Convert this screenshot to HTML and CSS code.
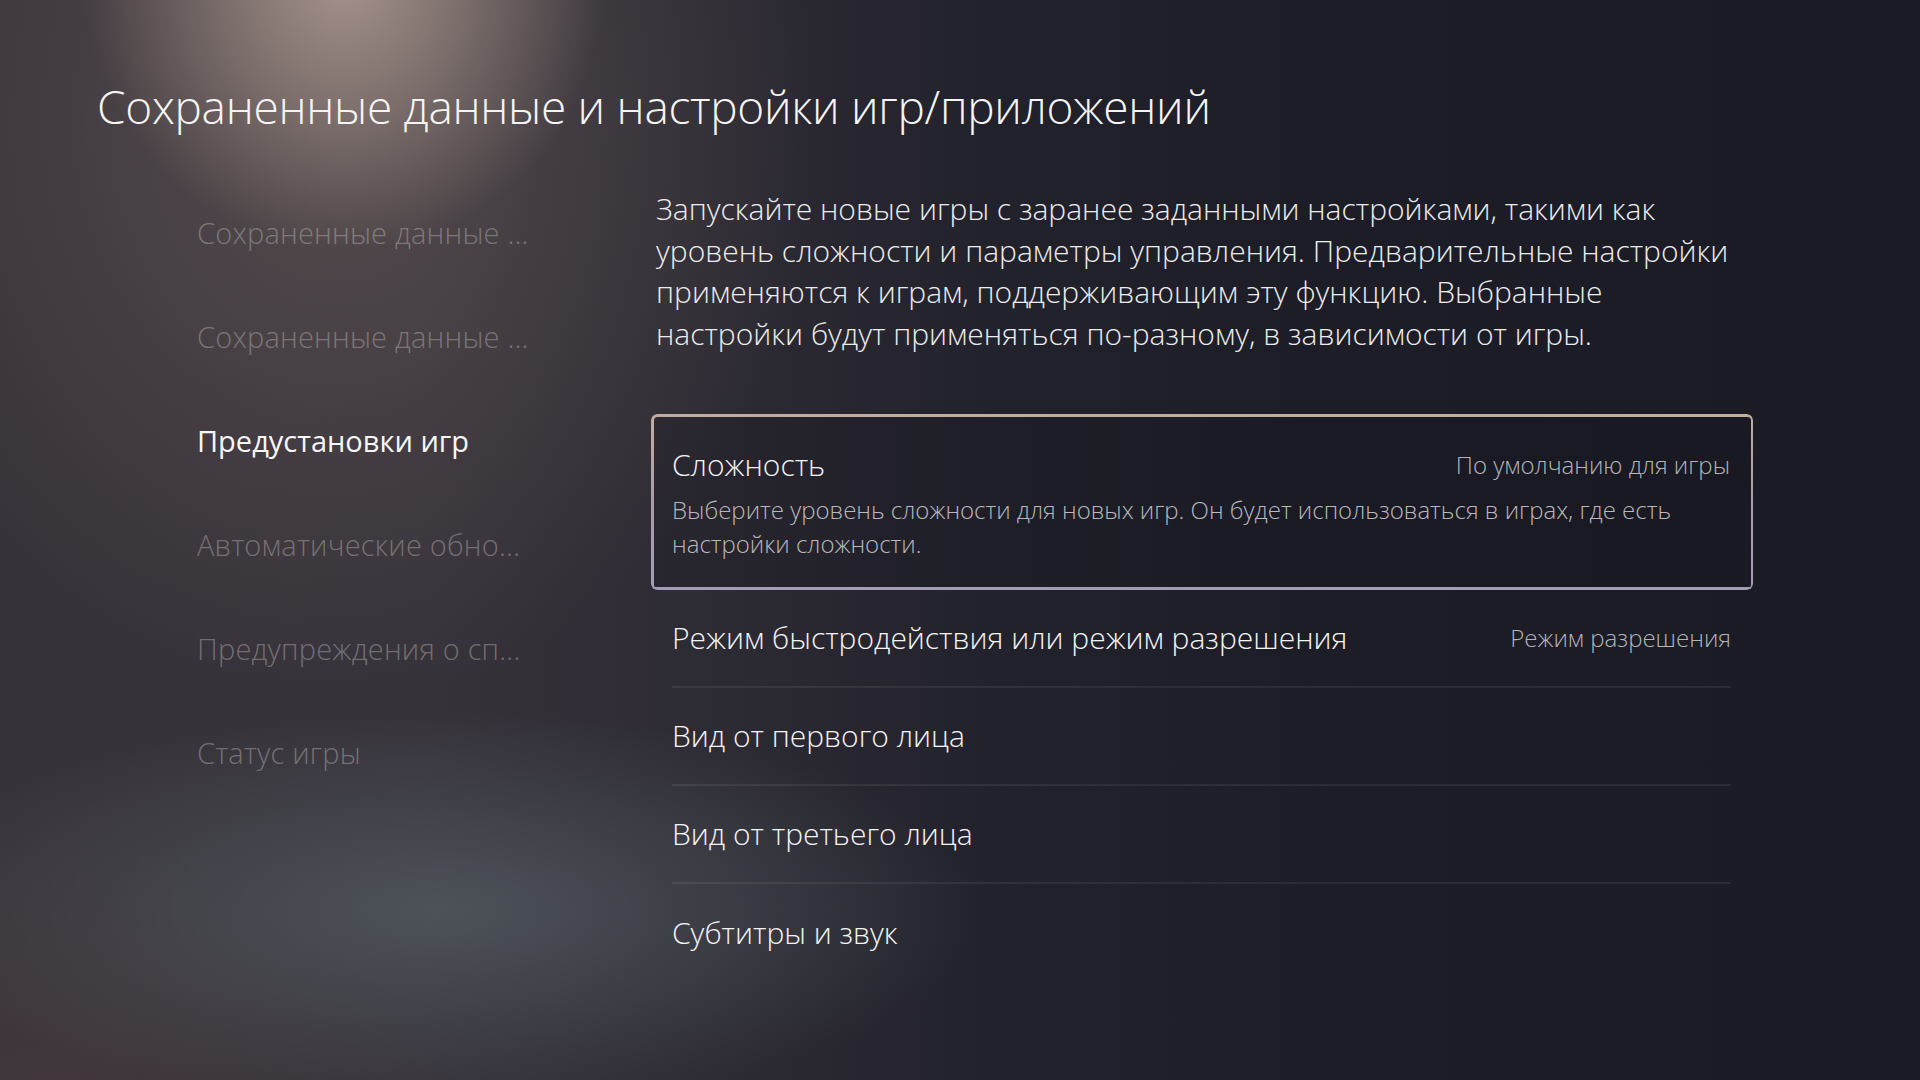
FILE: index.html
```html
<!DOCTYPE html>
<html lang="ru">
<head>
<meta charset="utf-8">
<title>Сохраненные данные и настройки игр/приложений</title>
<link rel="stylesheet" href="styles.css">
</head>
<body>
<div class="screen">
  <h1 class="title">Сохраненные данные и настройки игр/приложений</h1>
  <div class="layout">
    <nav class="sidebar">
      <div class="nav-item">Сохраненные данные ...</div>
      <div class="nav-item">Сохраненные данные ...</div>
      <div class="nav-item active">Предустановки игр</div>
      <div class="nav-item">Автоматические обно...</div>
      <div class="nav-item">Предупреждения о сп...</div>
      <div class="nav-item">Статус игры</div>
    </nav>
    <main class="content">
      <p class="intro">Запускайте новые игры с заранее заданными настройками, такими как уровень сложности и параметры управления. Предварительные настройки применяются к играм, поддерживающим эту функцию. Выбранные настройки будут применяться по-разному, в зависимости от игры.</p>
      <div class="list">
        <div class="card">
          <div class="row-head">
            <span class="row-title">Сложность</span>
            <span class="row-value">По умолчанию для игры</span>
          </div>
          <p class="card-desc">Выберите уровень сложности для новых игр. Он будет использоваться в играх, где есть настройки сложности.</p>
        </div>
        <div class="row">
          <span class="row-title">Режим быстродействия или режим разрешения</span>
          <span class="row-value">Режим разрешения</span>
        </div>
        <div class="row">
          <span class="row-title">Вид от первого лица</span>
        </div>
        <div class="row">
          <span class="row-title">Вид от третьего лица</span>
        </div>
        <div class="row last">
          <span class="row-title">Субтитры и звук</span>
        </div>
      </div>
    </main>
  </div>
</div>
</body>
</html>
```

FILE: styles.css
```css
html, body {
  margin: 0;
  padding: 0;
}

body {
  width: 1920px;
  height: 1080px;
  overflow: hidden;
  font-family: "Open Sans", "Noto Sans", sans-serif;
  color: #f2f2f2;
  background-color: #1b1d27;
  background-image:
    radial-gradient(ellipse 260px 270px at 345px -20px, rgba(180, 160, 150, 0.85), rgba(180, 160, 150, 0) 100%),
    radial-gradient(ellipse 480px 580px at 340px 120px, rgba(120, 105, 100, 0.45), rgba(120, 105, 100, 0) 100%),
    radial-gradient(ellipse 540px 200px at 440px 910px, rgba(85, 93, 100, 0.75), rgba(85, 93, 100, 0) 100%),
    radial-gradient(ellipse 400px 260px at 60px 1100px, rgba(75, 60, 62, 0.5), rgba(75, 60, 62, 0) 100%),
    linear-gradient(90deg, #38333a 0%, #36323a 22%, #2c2a33 38%, #22222c 52%, #1c1d27 68%, #1a1b25 100%);
}

.screen {
  padding: 73px 0 0 97px;
}

.title {
  margin: 0;
  font-size: 46px;
  font-weight: 300;
  line-height: 66px;
  color: #f4f4f4;
  letter-spacing: -0.3px;
}

.layout {
  display: flex;
  margin-top: 44px;
}

.sidebar {
  width: 454px;
  padding-left: 100px;
  padding-top: 28px;
  display: flex;
  flex-direction: column;
}

.nav-item {
  height: 104px;
  line-height: 44px;
  font-size: 29px;
  font-weight: 300;
  color: rgba(200, 195, 195, 0.42);
  white-space: nowrap;
  letter-spacing: 0.2px;
}

.nav-item.active {
  color: #f6f6f6;
  font-weight: 400;
  letter-spacing: 0;
}

.content {
  width: 1102px;
}

.intro {
  margin: 5px 0 0 5px;
  max-width: 1090px;
  font-size: 30px;
  line-height: 41.7px;
  font-weight: 300;
  color: #ececec;
}

.list {
  margin-top: 59px;
  display: flex;
  flex-direction: column;
}

.card {
  position: relative;
  border-radius: 6px;
  height: 176px;
  box-sizing: border-box;
  padding: 26px 23px 0 21px;
  background: rgba(18, 18, 26, 0.22);
}

.card::before {
  content: "";
  position: absolute;
  inset: 0;
  border-radius: 6px;
  padding: 2.5px;
  background: linear-gradient(180deg, #bfae9e 0%, #aa9ca8 50%, #a49cb4 100%);
  -webkit-mask: linear-gradient(#000 0 0) content-box, linear-gradient(#000 0 0);
  -webkit-mask-composite: xor;
  mask-composite: exclude;
}

.row-head {
  display: flex;
  justify-content: space-between;
  align-items: center;
  height: 50px;
}

.card-desc {
  margin: 3px 0 0 0;
  font-size: 24px;
  line-height: 34px;
  font-weight: 300;
  color: #b8b8bd;
}

.row {
  display: flex;
  justify-content: space-between;
  align-items: center;
  height: 98px;
  margin: 0 22px 0 21px;
  border-bottom: 2px solid rgba(255, 255, 255, 0.07);
  box-sizing: border-box;
}

.row.last {
  border-bottom: none;
}

.row-title {
  font-size: 30px;
  font-weight: 300;
  color: #f4f4f4;
}

.row-value {
  font-size: 24px;
  font-weight: 300;
  color: #b5b5ba;
}
```
